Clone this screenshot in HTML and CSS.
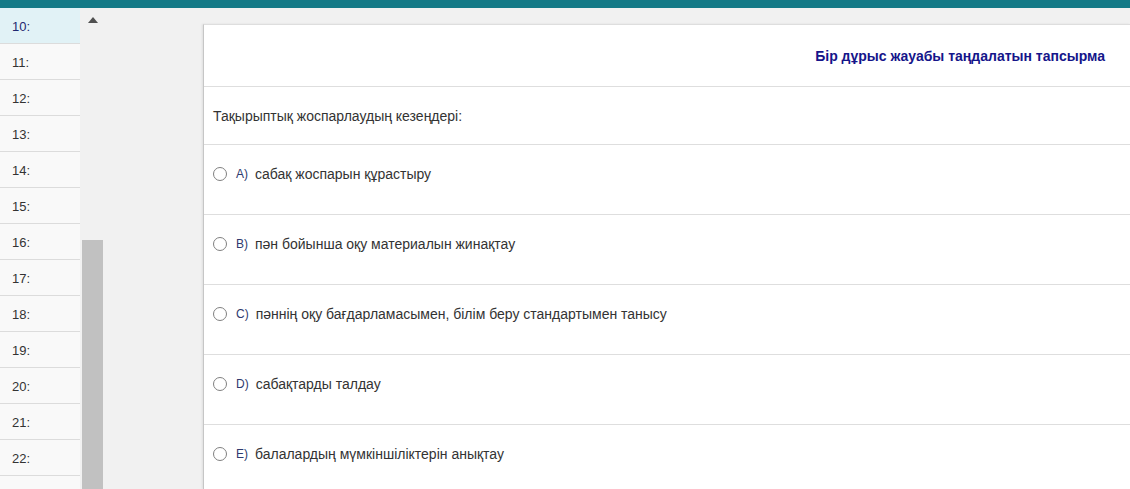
FILE: index.html
```html
<!DOCTYPE html>
<html lang="kk">
<head>
<meta charset="utf-8">
<title>Тест</title>
<link rel="stylesheet" href="styles.css">
</head>
<body>
<div class="topbar"></div>
<div class="layout">
  <div class="sidebar">
    <ul class="qlist">
      <li class="qitem active">10:</li>
      <li class="qitem">11:</li>
      <li class="qitem">12:</li>
      <li class="qitem">13:</li>
      <li class="qitem">14:</li>
      <li class="qitem">15:</li>
      <li class="qitem">16:</li>
      <li class="qitem">17:</li>
      <li class="qitem">18:</li>
      <li class="qitem">19:</li>
      <li class="qitem">20:</li>
      <li class="qitem">21:</li>
      <li class="qitem">22:</li>
      <li class="qitem"></li>
    </ul>
    <div class="scrollbar">
      <div class="arrow-up"></div>
      <div class="thumb"></div>
    </div>
  </div>
  <main class="main">
    <section class="panel">
      <header class="panel-head">Бір дұрыс жауабы таңдалатын тапсырма</header>
      <div class="question">Тақырыптық жоспарлаудың кезеңдері:</div>
      <label class="option"><span class="radio"></span><span class="letter">A)</span><span class="otext">сабақ жоспарын құрастыру</span></label>
      <label class="option"><span class="radio"></span><span class="letter">B)</span><span class="otext">пән бойынша оқу материалын жинақтау</span></label>
      <label class="option"><span class="radio"></span><span class="letter">C)</span><span class="otext">пәннің оқу бағдарламасымен, білім беру стандартымен танысу</span></label>
      <label class="option"><span class="radio"></span><span class="letter">D)</span><span class="otext">сабақтарды талдау</span></label>
      <label class="option"><span class="radio"></span><span class="letter">E)</span><span class="otext">балалардың мүмкіншіліктерін анықтау</span></label>
    </section>
  </main>
</div>
</body>
</html>
```

FILE: styles.css
```css
* { box-sizing: border-box; }
html, body {
  margin: 0;
  padding: 0;
  height: 100%;
  overflow: hidden;
  background: #f1f1f1;
  font-family: "Liberation Sans", Arial, sans-serif;
  color: #333;
}
.topbar {
  height: 8px;
  background: #147a87;
}
.layout {
  display: flex;
  height: 481px;
}
.sidebar {
  display: flex;
  flex: 0 0 103px;
  height: 100%;
  overflow: hidden;
}
.qlist {
  list-style: none;
  margin: 0;
  padding: 0;
  width: 80px;
  background: #f9f9f9;
}
.qitem {
  height: 36px;
  padding: 11px 0 0 12px;
  font-size: 13px;
  line-height: 16px;
  color: #333;
  border-bottom: 1px solid #dcdcdc;
}
.qitem.active {
  background: #e1f2f6;
  color: #1f2870;
}
.scrollbar {
  width: 23px;
  background: #f1f1f1;
  display: flex;
  flex-direction: column;
  align-items: center;
  padding-left: 2px;
}
.arrow-up {
  margin-top: 9px;
  width: 0;
  height: 0;
  border-left: 5.5px solid transparent;
  border-right: 5.5px solid transparent;
  border-bottom: 6px solid #505050;
}
.thumb {
  margin-top: 217px;
  width: 21px;
  flex: 1;
  background: #c1c1c1;
}
.main {
  flex: 1;
  padding: 16px 0 0 100px;
  overflow: hidden;
}
.panel {
  background: #fff;
  border-top: 1px solid #dedede;
  border-left: 1px solid #c6c6c6;
  box-shadow: -1px 0 2px rgba(0,0,0,0.08);
  height: 100%;
}
.panel-head {
  height: 62px;
  border-bottom: 1px solid #dedede;
  display: flex;
  align-items: center;
  justify-content: flex-end;
  padding-right: 25px;
  font-weight: bold;
  font-size: 14px;
  color: #15158a;
}
.question {
  height: 58px;
  border-bottom: 1px solid #dedede;
  display: flex;
  align-items: center;
  padding-left: 9px;
  font-size: 14px;
  color: #333;
}
.option {
  display: flex;
  height: 70px;
  padding: 21px 0 0 9px;
  align-items: flex-start;
  border-bottom: 1px solid #dedede;
  font-size: 14px;
  color: #333;
}
.radio {
  width: 14px;
  height: 14px;
  border: 1px solid #808080;
  border-radius: 50%;
  margin-top: 1px;
  background: #fff;
  flex: 0 0 14px;
}
.letter {
  margin-left: 9px;
  font-size: 12px;
  line-height: 16px;
  color: #2e3a6e;
}
.otext {
  margin-left: 7px;
  line-height: 16px;
}
```
